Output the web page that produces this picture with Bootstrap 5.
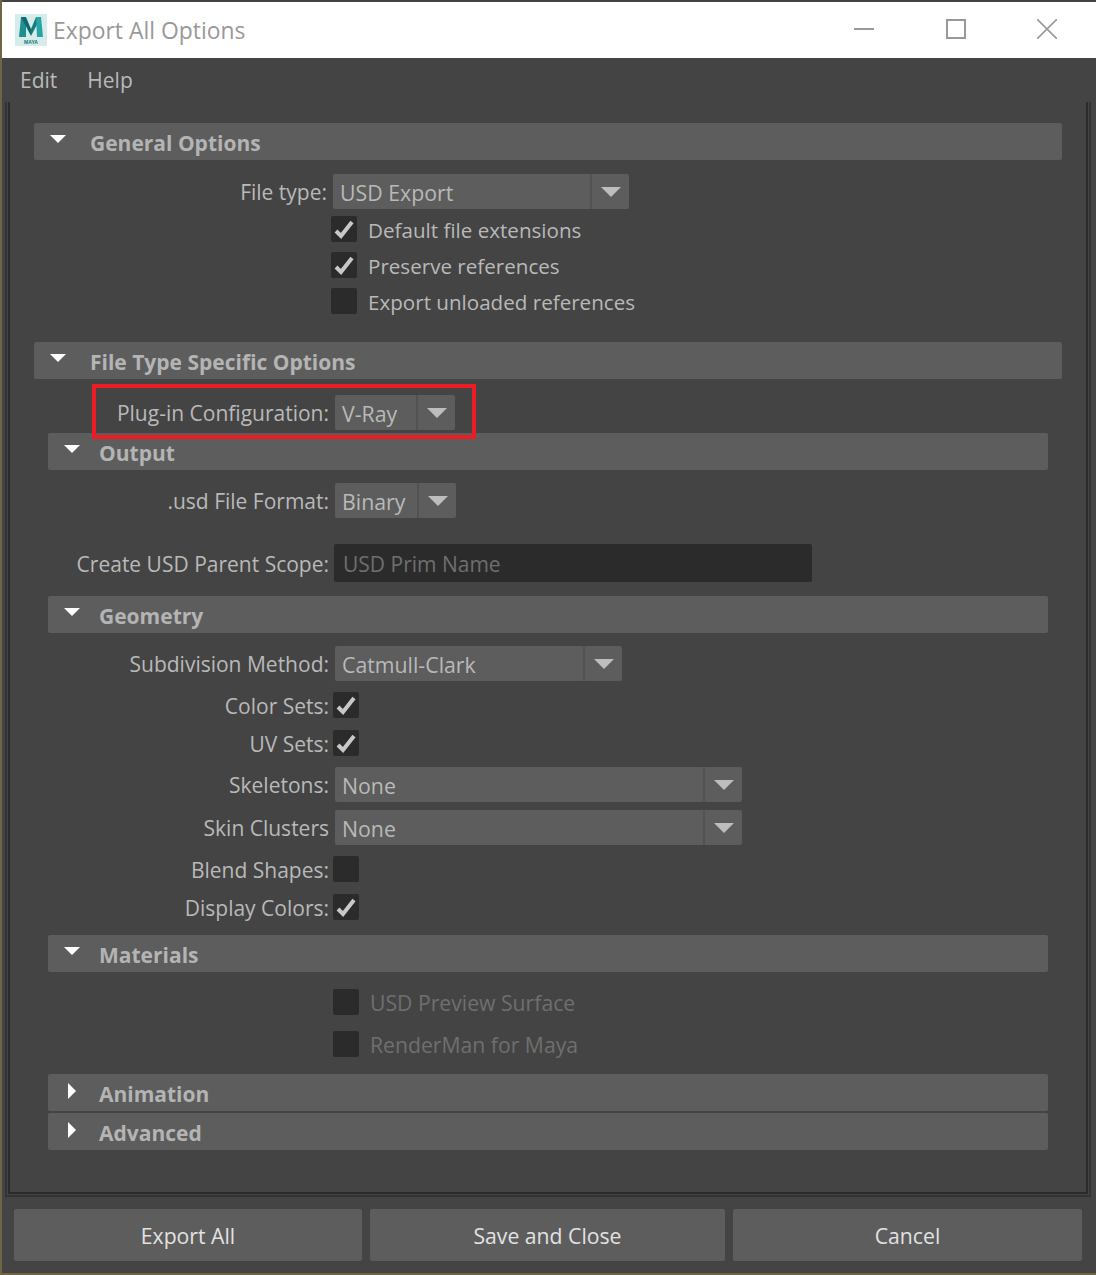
<!DOCTYPE html>
<html lang="en">
<head>
<meta charset="utf-8">
<title>Export All Options</title>
<link rel="stylesheet" href="https://cdn.jsdelivr.net/npm/bootstrap@5.3.0/dist/css/bootstrap.min.css">
<style>
html,body{height:1275px;overflow:hidden}
body{background:#6e6642;font-family:"Open Sans","Noto Sans",sans-serif;font-size:21px;color:#b9b9b9;line-height:1}
.win{width:1094px;height:1273px;background:#444;border-top:2px solid #444;margin-left:2px;position:relative}
.ttl{height:56px;background:#fff;color:#999}
.ttl-name{font-size:22.9px;margin-left:6px;padding-top:2px}
.logo{margin-left:13px}
.wbtn{margin-left:auto;margin-right:39px;margin-top:-2px;gap:71.5px}
.mnu{height:44px;padding-left:18px;gap:30px}
.frame{height:1095px;margin-left:3px;width:1086px;border:solid #333;border-width:0 2px 2px;padding:0 1px 1px}
.frame-in{height:100%;border:solid #2b2b2b;border-width:0 2px 2px;padding:21px 0 0 24px}
.sec{height:37px;background:#5d5d5d;border-radius:2px;font-weight:700;color:#b4b4b4;width:1028px;padding-left:16px}
.sec-name{margin-left:24px;padding-top:4px}
.sub{width:1000px;margin-left:14px;padding-left:16px}
.sub .sec-name{margin-left:19px}
.rw{height:35px}
.lbl,.lbl-b{text-align:right;margin-right:6px;flex:none;padding-top:2px}
.lbl{width:293px}
.lbl-b{width:295px}
.drp{height:35px;background:#5d5d5d;border-radius:2px;display:flex;align-items:center;padding-left:7px}
.drp-txt{padding-top:2px;font-size:21.3px}
.drp-seg{margin-left:auto;width:39px;height:100%;border-left:2px solid #525252;display:flex;align-items:center;justify-content:center}
.d-ft{width:296px}.d-vr{width:120px}.d-bn{width:121px}.d-ss{width:287px}.d-sk{width:407px}
.tri{width:0;height:0;border-style:solid;border-width:10px 10px 0;border-color:#bdbdbd transparent transparent}
.tri-h{border-color:#fff transparent transparent;border-width:8px 8px 0}
.tri-r{width:0;height:0;border-style:solid;border-width:8px 0 8px 8px;border-color:transparent transparent transparent #fff;margin-left:4px;margin-right:-4px}
.tog{width:16px;flex:none;margin-top:-6px}
.tog.tri-r{margin-top:-4px}
.chk{width:26px;height:26px;background:#2b2b2b;border-radius:2px;display:flex;align-items:center;justify-content:center;flex:none}
.ckm{filter:blur(.6px)}
.chk-t{margin-left:11px;padding-top:2px;font-size:20.6px}
.ck-rw{height:26px}
.dim{color:#6f6f6f;font-size:21.2px}
.inp{width:478px;height:38px;background:#2b2b2b;border-radius:2px;color:#6f6f6f;padding:2px 0 0 9px;margin-left:-1px}
.red{position:absolute;left:90px;top:382px;width:384px;height:55px;border:4px solid #ed1c24}
.acts{padding:12px 12px 0 12px;gap:8px}
.act{height:52px;background:#5d5d5d;border-radius:2px;color:#e2e2e2;font-size:21.2px;padding-top:2px}
.a1{width:348px}.a2{width:355px}.a3{width:349px}
.mt-a{margin-top:14px}.mt-b{margin-top:7px}.mt-c{margin-top:10px}.mt-d{margin-top:28px}.mt-e{margin-top:16px}.mt-f{margin-top:3px}.mt-g{margin-top:13px}.mt-h{margin-top:26px}.mt-i{margin-top:14px}.mt-j{margin-top:11px}.mt-k{margin-top:12px}.mt-l{margin-top:8px}.mt-m{margin-top:17px}.mt-n{margin-top:2px}.mt-o{margin-top:16px}.mt-p{margin-top:15px}
.ml-ch{margin-left:-2px}
</style>
</head>
<body>
<div class="win">
  <div class="ttl d-flex align-items-center">
    <svg class="logo" width="32" height="32" viewBox="0 0 32 32"><rect width="32" height="32" fill="#d5ecea"/><path d="M4 23 L6 3 L11 3 L11 23 Z" fill="#1f8f92"/><path d="M6 3 L11 3 L16 15 L16 22 Z" fill="#0f6a70"/><path d="M26 3 L21 3 L16 15 L16 22 Z" fill="#137c80"/><path d="M21 3 L26 3 L28 23 L22 23 Z" fill="#2aa3a3"/><text x="16" y="30" font-size="5" font-weight="700" text-anchor="middle" fill="#0f7378" font-family="Liberation Sans">MAYA</text></svg>
    <span class="ttl-name">Export All Options</span>
    <div class="wbtn d-flex align-items-center">
      <svg width="20" height="20" viewBox="0 0 20 20"><path d="M0 9h20v2H0z" fill="#999"/></svg>
      <svg width="20" height="20" viewBox="0 0 20 20"><rect x="1" y="1" width="18" height="18" fill="none" stroke="#999" stroke-width="2"/></svg>
      <svg width="20" height="20" viewBox="0 0 20 20"><path d="M0 0L20 20M20 0L0 20" stroke="#999" stroke-width="1.6" fill="none"/></svg>
    </div>
  </div>
  <div class="mnu d-flex align-items-center"><span>Edit</span><span>Help</span></div>
  <div class="frame"><div class="frame-in">
    <div class="sec d-flex align-items-center"><span class="tri tri-h tog"></span><span class="sec-name">General Options</span></div>
    <div class="rw d-flex align-items-center mt-a"><span class="lbl">File type:</span><div class="drp d-ft"><span class="drp-txt">USD Export</span><span class="drp-seg"><span class="tri"></span></span></div></div>
    <div class="ck-rw d-flex align-items-center mt-b"><span class="lbl"></span><span class="chk ml-ch"><svg class="ckm" width="22" height="22" viewBox="0 0 22 22"><path d="M3 13l5 5L19 4" fill="none" stroke="#c8c8c8" stroke-width="4"/></svg></span><span class="chk-t">Default file extensions</span></div>
    <div class="ck-rw d-flex align-items-center mt-c"><span class="lbl"></span><span class="chk ml-ch"><svg class="ckm" width="22" height="22" viewBox="0 0 22 22"><path d="M3 13l5 5L19 4" fill="none" stroke="#c8c8c8" stroke-width="4"/></svg></span><span class="chk-t">Preserve references</span></div>
    <div class="ck-rw d-flex align-items-center mt-c"><span class="lbl"></span><span class="chk ml-ch"></span><span class="chk-t">Export unloaded references</span></div>
    <div class="sec d-flex align-items-center mt-d"><span class="tri tri-h tog"></span><span class="sec-name">File Type Specific Options</span></div>
    <div class="rw d-flex align-items-center mt-e"><span class="lbl-b">Plug-in Configuration:</span><div class="drp d-vr"><span class="drp-txt">V-Ray</span><span class="drp-seg"><span class="tri"></span></span></div></div>
    <div class="sec sub d-flex align-items-center mt-f"><span class="tri tri-h tog"></span><span class="sec-name">Output</span></div>
    <div class="rw d-flex align-items-center mt-g"><span class="lbl-b">.usd File Format:</span><div class="drp d-bn"><span class="drp-txt">Binary</span><span class="drp-seg"><span class="tri"></span></span></div></div>
    <div class="d-flex align-items-center mt-h"><span class="lbl-b">Create USD Parent Scope:</span><div class="inp d-flex align-items-center">USD Prim Name</div></div>
    <div class="sec sub d-flex align-items-center mt-i"><span class="tri tri-h tog"></span><span class="sec-name">Geometry</span></div>
    <div class="rw d-flex align-items-center mt-g"><span class="lbl-b">Subdivision Method:</span><div class="drp d-ss"><span class="drp-txt">Catmull-Clark</span><span class="drp-seg"><span class="tri"></span></span></div></div>
    <div class="ck-rw d-flex align-items-center mt-j"><span class="lbl-b">Color Sets:</span><span class="chk ml-ch"><svg class="ckm" width="22" height="22" viewBox="0 0 22 22"><path d="M3 13l5 5L19 4" fill="none" stroke="#c8c8c8" stroke-width="4"/></svg></span></div>
    <div class="ck-rw d-flex align-items-center mt-k"><span class="lbl-b">UV Sets:</span><span class="chk ml-ch"><svg class="ckm" width="22" height="22" viewBox="0 0 22 22"><path d="M3 13l5 5L19 4" fill="none" stroke="#c8c8c8" stroke-width="4"/></svg></span></div>
    <div class="rw d-flex align-items-center mt-j"><span class="lbl-b">Skeletons:</span><div class="drp d-sk"><span class="drp-txt">None</span><span class="drp-seg"><span class="tri"></span></span></div></div>
    <div class="rw d-flex align-items-center mt-l"><span class="lbl-b">Skin Clusters</span><div class="drp d-sk"><span class="drp-txt">None</span><span class="drp-seg"><span class="tri"></span></span></div></div>
    <div class="ck-rw d-flex align-items-center mt-j"><span class="lbl-b">Blend Shapes:</span><span class="chk ml-ch"></span></div>
    <div class="ck-rw d-flex align-items-center mt-k"><span class="lbl-b">Display Colors:</span><span class="chk ml-ch"><svg class="ckm" width="22" height="22" viewBox="0 0 22 22"><path d="M3 13l5 5L19 4" fill="none" stroke="#c8c8c8" stroke-width="4"/></svg></span></div>
    <div class="sec sub d-flex align-items-center mt-p"><span class="tri tri-h tog"></span><span class="sec-name">Materials</span></div>
    <div class="ck-rw d-flex align-items-center mt-m"><span class="lbl-b"></span><span class="chk ml-ch"></span><span class="chk-t dim">USD Preview Surface</span></div>
    <div class="ck-rw d-flex align-items-center mt-o"><span class="lbl-b"></span><span class="chk ml-ch"></span><span class="chk-t dim">RenderMan for Maya</span></div>
    <div class="sec sub d-flex align-items-center mt-m"><span class="tri-r tog"></span><span class="sec-name">Animation</span></div>
    <div class="sec sub d-flex align-items-center mt-n"><span class="tri-r tog"></span><span class="sec-name">Advanced</span></div>
  </div></div>
  <div class="acts d-flex">
    <div class="act a1 d-flex align-items-center justify-content-center">Export All</div>
    <div class="act a2 d-flex align-items-center justify-content-center">Save and Close</div>
    <div class="act a3 d-flex align-items-center justify-content-center">Cancel</div>
  </div>
  <div class="red"></div>
</div>
</body>
</html>
